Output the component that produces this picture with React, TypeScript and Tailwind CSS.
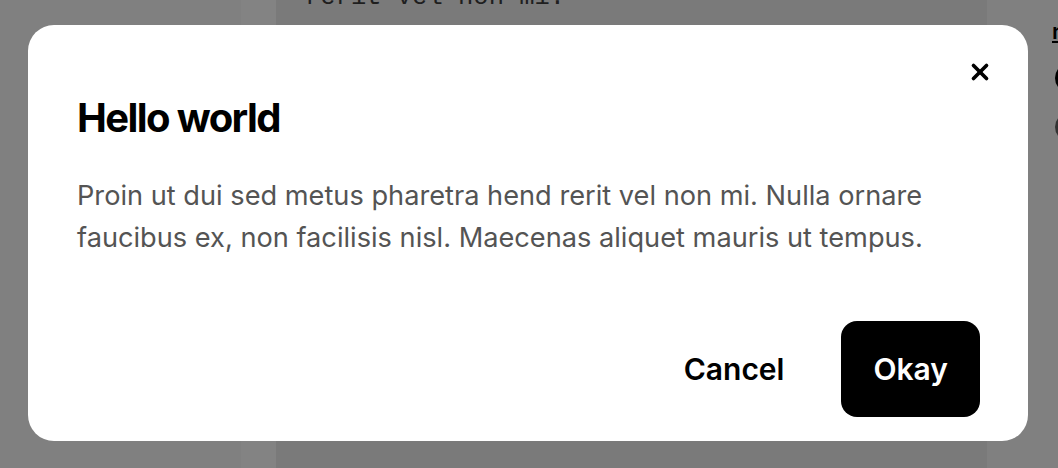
import { X } from "lucide-react";

function PageBehind() {
  return (
    <div className="flex h-full w-full">
      {/* sidebar */}
      <div className="w-[241px] shrink-0 bg-[#808080]" />
      <div className="w-[35px] shrink-0 bg-[#838383]" />
      {/* main content */}
      <div className="flex-1 bg-[#7a7a7a] pl-[29px] overflow-hidden">
        <p className="-mt-[18px] font-['Liberation_Mono',monospace] text-[25.5px] leading-[32px] text-[#1f1f1f]">
          rerit vel non mi.
        </p>
      </div>
      {/* right column */}
      <div className="w-[71px] shrink-0 bg-[#808080] pl-[65px] pt-[20px] overflow-hidden">
        <span className="font-['Inter',sans-serif] text-[22px] font-semibold leading-[22px] text-black underline">
          n
        </span>
        <div className="mt-[18px] ml-[3px] h-[30px] w-[30px] shrink-0 rounded-full bg-black" />
        <div className="mt-[20px] ml-[3px] h-[28px] w-[28px] shrink-0 rounded-full bg-[#333333]" />
      </div>
    </div>
  );
}

export default function App() {
  return (
    <div className="relative h-[468px] w-full overflow-hidden font-['Inter',sans-serif]">
      <PageBehind />

      {/* modal layer */}
      <div className="absolute inset-0 pl-[28px] pt-[25px]">
        <div className="relative w-[1000px] h-[416px] rounded-[26px] bg-white pl-[49px] pr-[48px] flex flex-col">
          <button className="absolute right-[35px] top-[34px] text-black">
            <X className="h-[26px] w-[26px]" strokeWidth={3.4} />
          </button>

          <h2 className="mt-[69px] text-[40px] leading-[48px] font-bold tracking-[-0.04em] text-black">
            Hello world
          </h2>

          <p className="mt-[33px] text-[27.2px] leading-[42px] text-[#545454]">
            Proin ut dui sed metus pharetra hend rerit vel non mi. Nulla ornare
            faucibus ex, non facilisis nisl. Maecenas aliquet mauris ut tempus.
          </p>

          <div className="mt-auto mb-[24px] flex items-center justify-end gap-[25px]">
            <button className="h-[96px] px-[32px] rounded-[16px] text-[30px] font-semibold text-black">
              Cancel
            </button>
            <button className="h-[96px] px-[32px] rounded-[16px] bg-black text-[30px] font-semibold text-white">
              Okay
            </button>
          </div>
        </div>
      </div>
    </div>
  );
}
